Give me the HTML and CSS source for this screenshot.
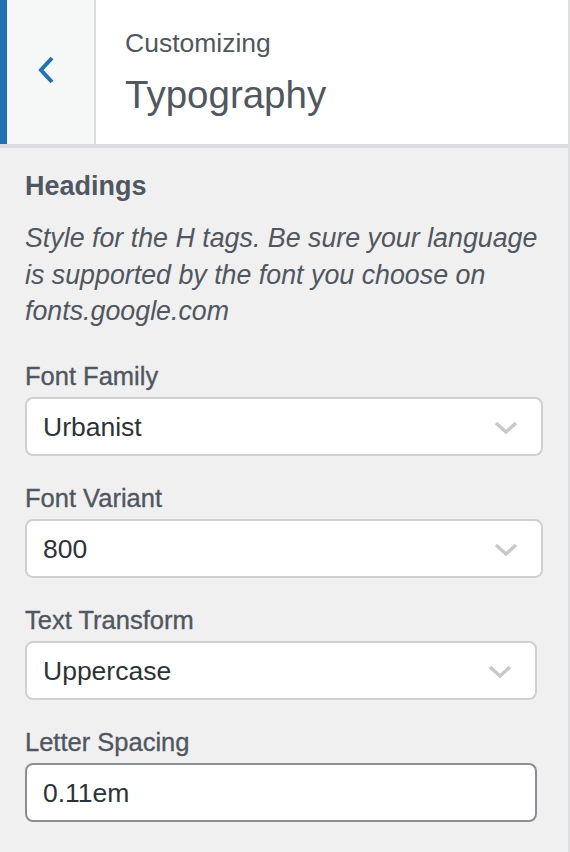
FILE: index.html
```html
<!DOCTYPE html>
<html lang="en">
<head>
<meta charset="utf-8">
<title>Customizing Typography</title>
<link rel="stylesheet" href="styles.css">
</head>
<body>
<div class="panel">
  <header class="header">
    <div class="back">
      <svg class="back-icon" width="18" height="28" viewBox="0 0 18 28"><polyline points="15,2 4,14 15,26" fill="none" stroke="#2271b1" stroke-width="4"/></svg>
    </div>
    <div class="title">
      <div class="title-sub">Customizing</div>
      <div class="title-main">Typography</div>
    </div>
  </header>
  <main class="section">
    <h2 class="section-title">Headings</h2>
    <p class="section-desc">Style for the H tags. Be sure your language is supported by the font you choose on fonts.google.com</p>

    <div class="control">
      <div class="label">Font Family</div>
      <div class="select">
        <span class="select-value">Urbanist</span>
        <svg class="caret" width="24" height="13" viewBox="0 0 24 13"><polyline points="2,2 12,11 22,2" fill="none" stroke="#c8c9cb" stroke-width="3.5"/></svg>
      </div>
    </div>

    <div class="control">
      <div class="label">Font Variant</div>
      <div class="select">
        <span class="select-value">800</span>
        <svg class="caret" width="24" height="13" viewBox="0 0 24 13"><polyline points="2,2 12,11 22,2" fill="none" stroke="#c8c9cb" stroke-width="3.5"/></svg>
      </div>
    </div>

    <div class="control control-narrow">
      <div class="label">Text Transform</div>
      <div class="select">
        <span class="select-value">Uppercase</span>
        <svg class="caret" width="24" height="13" viewBox="0 0 24 13"><polyline points="2,2 12,11 22,2" fill="none" stroke="#c8c9cb" stroke-width="3.5"/></svg>
      </div>
    </div>

    <div class="control control-narrow">
      <div class="label">Letter Spacing</div>
      <input class="text-input" type="text" value="0.11em">
    </div>
  </main>
</div>
</body>
</html>
```

FILE: styles.css
```css
* {
  box-sizing: border-box;
}

html, body {
  margin: 0;
  padding: 0;
  height: 100%;
}

body {
  background: #f0f0f1;
  font-family: "Liberation Sans", Arial, sans-serif;
  color: #50575e;
}

.panel {
  width: 570px;
  min-height: 852px;
  background: #f0f0f1;
  border-right: 2px solid #dedfe0;
}

.header {
  display: flex;
  height: 148px;
  background: #fff;
  border-bottom: 4px solid #dcdcde;
}

.back {
  width: 96px;
  flex: none;
  display: flex;
  align-items: center;
  padding-left: 30px;
  padding-bottom: 4px;
  background: #f6f7f7;
  border-left: 7px solid #2271b1;
  border-right: 2px solid #dcdcde;
}

.back-icon {
  display: block;
}

.title {
  padding: 28px 0 0 29px;
}

.title-sub {
  font-size: 26.5px;
  line-height: 30px;
  color: #50575e;
}

.title-main {
  margin-top: 15px;
  font-size: 38.5px;
  line-height: 44px;
  color: #50575e;
}

.section {
  display: flex;
  flex-direction: column;
  padding: 22px 25px 0 25px;
}

.section-title {
  margin: 0;
  font-size: 27px;
  line-height: 32px;
  font-weight: bold;
  color: #50575e;
}

.section-desc {
  margin: 18px 0 0 0;
  font-size: 26.8px;
  line-height: 36.5px;
  font-style: italic;
  color: #50575e;
}

.control {
  display: flex;
  flex-direction: column;
  margin-top: 27px;
}

.section-desc + .control {
  margin-top: 31px;
}

.control-narrow {
  margin-right: 6px;
}

.label {
  font-size: 25.5px;
  line-height: 30px;
  color: #50575e;
  -webkit-text-stroke: 0.35px #50575e;
  margin-bottom: 6px;
}

.select {
  display: flex;
  align-items: center;
  justify-content: space-between;
  height: 59px;
  padding: 2px 23px 0 16px;
  background: #fff;
  border: 2px solid #cfd0d2;
  border-radius: 8px;
}

.select-value {
  font-size: 26.5px;
  color: #2c3338;
}

.caret {
  display: block;
}

.text-input {
  display: block;
  width: 100%;
  height: 59px;
  margin: 0;
  padding: 2px 16px 0 16px;
  background: #fff;
  border: 2px solid #8c8f94;
  border-radius: 8px;
  font-family: "Liberation Sans", Arial, sans-serif;
  font-size: 26.5px;
  color: #2c3338;
  outline: none;
}
```
